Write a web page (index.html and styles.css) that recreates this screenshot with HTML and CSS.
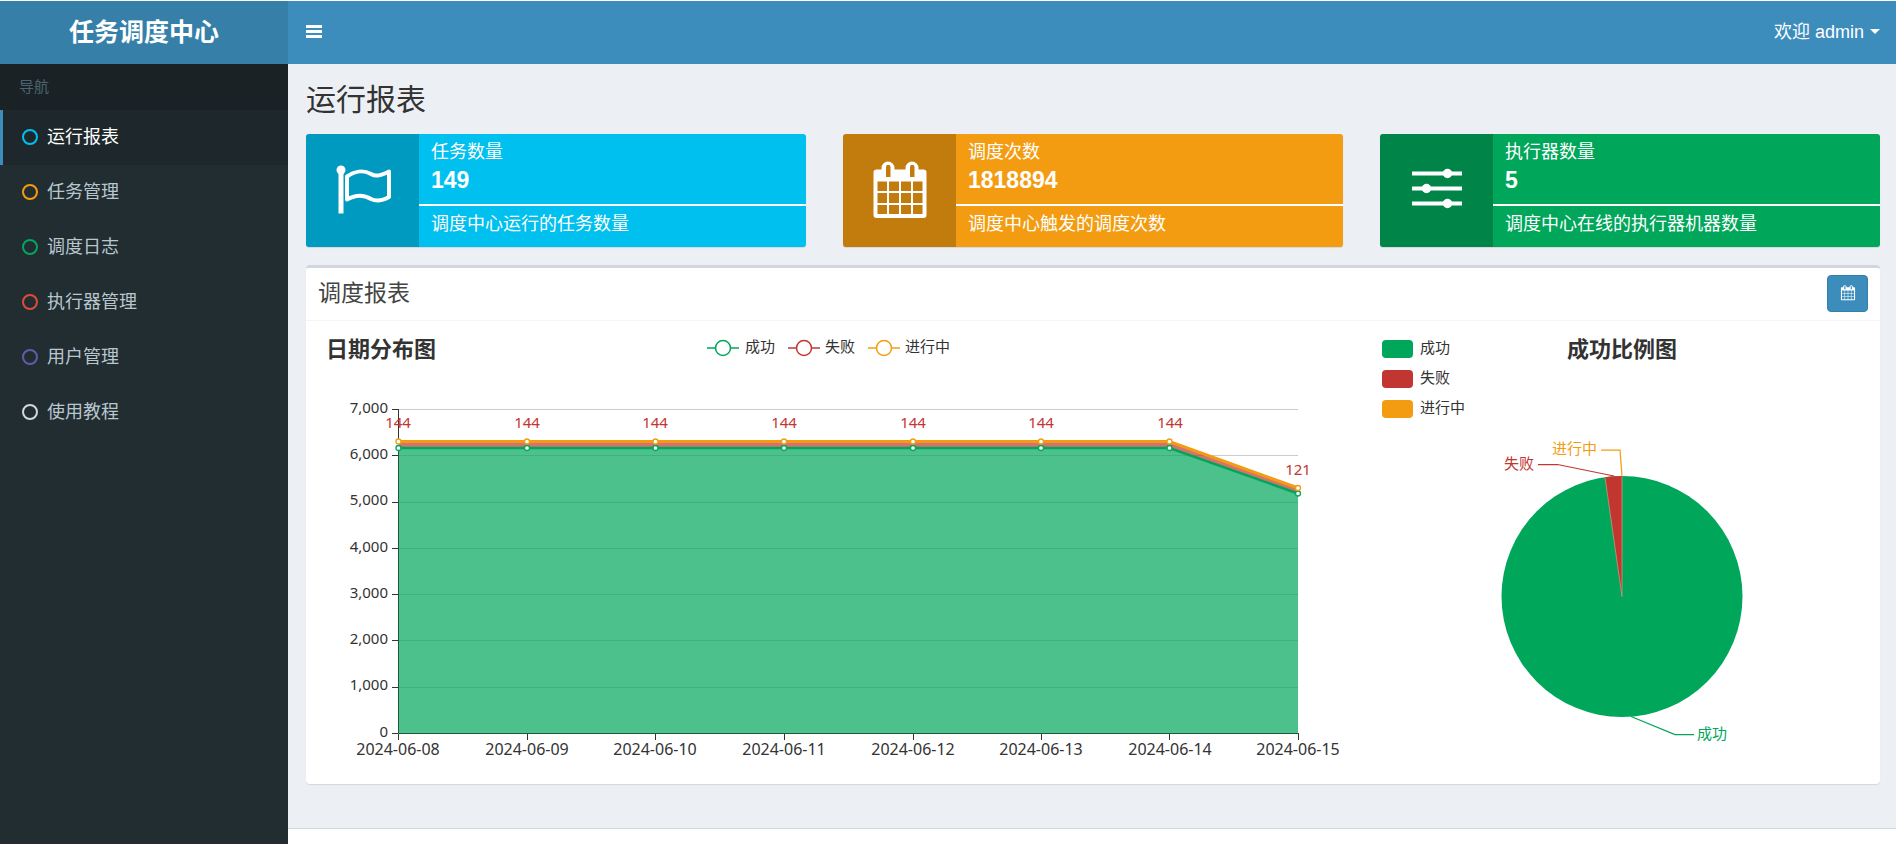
FILE: index.html
```html
<!DOCTYPE html>
<html lang="zh-CN">
<head>
<meta charset="utf-8">
<title>任务调度中心</title>
<link rel="stylesheet" href="styles.css">
</head>
<body>
<svg class="defs" aria-hidden="true">
  <symbol id="calendar" viewBox="0 0 60 60">
    <path fill="currentColor" fill-rule="evenodd" d="M3.500 11.500a3 3 0 0 1 3-3H11.500V7a6.500 6.500 0 0 1 13 0V8.500H35.500V7a6.500 6.500 0 0 1 13 0V8.500H53.500a3 3 0 0 1 3 3V54a3 3 0 0 1-3 3H6.500a3 3 0 0 1-3-3ZM16 6V16h4.500V6a2 2 0 0 0-4.500 0ZM40 6V16h4.500V6a2 2 0 0 0-4.500 0ZM7.500 20.500v9.500h9.500v-9.500ZM19 20.500v9.500h10v-9.500ZM31 20.500v9.500h10v-9.500ZM43 20.500v9.500h9.500v-9.500ZM7.500 32v10h9.500V32ZM19 32v10h10V32ZM31 32v10h10V32ZM43 32v10h9.500V32ZM7.500 44v9h9.500V44ZM19 44v9h10V44ZM31 44v9h10V44ZM43 44v9h9.500V44Z"/>
  </symbol>
</svg>
<header class="topbar">
  <a class="logo" href="#">任务调度中心</a>
  <nav class="navbar">
    <button class="toggle" type="button" aria-label="切换导航">
      <svg width="16" height="14" viewBox="0 0 16 14"><path d="M0 1.500h16M0 6.500h16M0 11.500h16" stroke="currentColor" stroke-width="3"/></svg>
    </button>
    <a class="user" href="#">欢迎 admin <span class="caret"></span></a>
  </nav>
</header>
<div class="wrapper">
  <aside class="sidebar">
    <div class="nav-title">导航</div>
    <nav class="menu">
      <a class="item active" href="#"><span class="ring aqua"></span>运行报表</a>
      <a class="item" href="#"><span class="ring yellow"></span>任务管理</a>
      <a class="item" href="#"><span class="ring green"></span>调度日志</a>
      <a class="item" href="#"><span class="ring red"></span>执行器管理</a>
      <a class="item" href="#"><span class="ring purple"></span>用户管理</a>
      <a class="item" href="#"><span class="ring gray"></span>使用教程</a>
    </nav>
  </aside>
  <div class="page">
    <main class="content">
      <h1>运行报表</h1>
      <section class="cards">
        <div class="card card-aqua">
          <div class="card-icon">
            <svg width="60" height="60" viewBox="-2 -2 60 60"><circle cx="6" cy="7" r="4.500" fill="currentColor"/><path d="M6 7V50.500" stroke="currentColor" stroke-width="5"/><path d="M12 13.500C19 8.500 28 6.500 36 11C41 14 46 12.500 54 8.500V34C46 38.500 41 38.500 36 36C28 31 20 32 12 36.500Z" fill="none" stroke="currentColor" stroke-width="4" stroke-linejoin="round"/></svg>
          </div>
          <div class="card-body"><div class="card-main"><span>任务数量</span><strong>149</strong></div><p>调度中心运行的任务数量</p></div>
        </div>
        <div class="card card-yellow">
          <div class="card-icon"><svg width="60" height="60"><use href="#calendar"/></svg></div>
          <div class="card-body"><div class="card-main"><span>调度次数</span><strong>1818894</strong></div><p>调度中心触发的调度次数</p></div>
        </div>
        <div class="card card-green">
          <div class="card-icon">
            <svg width="60" height="60" viewBox="0 0 60 60"><path d="M5 12.500H55M5 27.500H55M5 42.500H55" stroke="currentColor" stroke-width="4"/><g fill="currentColor"><circle cx="40.500" cy="12.500" r="4.700"/><circle cx="19.500" cy="27.500" r="4.700"/><circle cx="40.500" cy="42.500" r="4.700"/></g></svg>
          </div>
          <div class="card-body"><div class="card-main"><span>执行器数量</span><strong>5</strong></div><p>调度中心在线的执行器机器数量</p></div>
        </div>
      </section>
      <section class="box">
        <div class="box-header">
          <h2>调度报表</h2>
          <button class="date-btn" type="button" aria-label="选择日期"><svg width="16" height="16"><use href="#calendar"/></svg></button>
        </div>
        <div class="box-body">
          <svg class="chart" viewBox="0 0 1022 439" role="img" aria-label="日期分布图">
            <text class="chart-title" x="8" y="24">日期分布图</text>
            <g fill="#fff" stroke-width="1.500">
              <g stroke="#00a65a"><path d="M389 15h32"/><circle cx="405" cy="15" r="7.500"/></g>
              <g stroke="#c23632"><path d="M470 15h32"/><circle cx="486" cy="15" r="7.500"/></g>
              <g stroke="#f39c12"><path d="M550 15h32"/><circle cx="566" cy="15" r="7.500"/></g>
            </g>
            <g class="label"><text x="427" y="19">成功</text><text x="507" y="19">失败</text><text x="587" y="19">进行中</text></g>
            <path stroke="#ccc" d="M80 76.500H980M80 122.500H980M80 169.500H980M80 215.500H980M80 261.500H980M80 307.500H980M80 354.500H980"/>
            <path fill="#00a65a" fill-opacity=".7" d="M80.500 115H851.500L980 160.500V401H80.500Z"/>
            <path fill="#c23632" fill-opacity=".7" d="M80.500 108.500H851.500L980 155V160.500L851.500 115H80.500Z"/>
            <path fill="none" stroke="#333" d="M80.500 76V108M74 76.500h6M74 122.500h6M74 169.500h6M74 215.500h6M74 261.500h6M74 307.500h6M74 354.500h6M74 400.500h6M80.500 401v6M209.500 401v6M337.500 401v6M466.500 401v6M595.500 401v6M723.500 401v6M851.500 401v6M980.500 401v6"/>
            <path fill="none" stroke="#1d5a3d" d="M80.500 115V400.500H981"/>
            <path fill="none" stroke="#00a65a" stroke-width="2.500" d="M80.500 115H851.500L980 160.500"/>
            <path fill="none" stroke="#f39c12" stroke-width="3" d="M80.500 108.500H851.500L980 155"/>
            <g fill="#fff" stroke="#00a65a" stroke-width="1.300"><circle cx="80.500" cy="115" r="2.500"/><circle cx="209" cy="115" r="2.500"/><circle cx="337.500" cy="115" r="2.500"/><circle cx="466" cy="115" r="2.500"/><circle cx="595" cy="115" r="2.500"/><circle cx="723" cy="115" r="2.500"/><circle cx="851.500" cy="115" r="2.500"/><circle cx="980" cy="160.500" r="2.500"/></g>
            <g fill="#fff" stroke="#f39c12" stroke-width="1.300"><circle cx="80.500" cy="108.500" r="2.500"/><circle cx="209" cy="108.500" r="2.500"/><circle cx="337.500" cy="108.500" r="2.500"/><circle cx="466" cy="108.500" r="2.500"/><circle cx="595" cy="108.500" r="2.500"/><circle cx="723" cy="108.500" r="2.500"/><circle cx="851.500" cy="108.500" r="2.500"/><circle cx="980" cy="155" r="2.500"/></g>
            <g class="label value"><text x="80" y="95">144</text><text x="209" y="95">144</text><text x="337" y="95">144</text><text x="466" y="95">144</text><text x="595" y="95">144</text><text x="723" y="95">144</text><text x="852" y="95">144</text><text x="980" y="142">121</text></g>
            <g class="label y-label"><text x="70" y="80">7,000</text><text x="70" y="126">6,000</text><text x="70" y="172">5,000</text><text x="70" y="219">4,000</text><text x="70" y="265">3,000</text><text x="70" y="311">2,000</text><text x="70" y="357">1,000</text><text x="70" y="404">0</text></g>
            <g class="label x-label"><text x="80" y="422">2024-06-08</text><text x="209" y="422">2024-06-09</text><text x="337" y="422">2024-06-10</text><text x="466" y="422">2024-06-11</text><text x="595" y="422">2024-06-12</text><text x="723" y="422">2024-06-13</text><text x="852" y="422">2024-06-14</text><text x="980" y="422">2024-06-15</text></g>
          </svg>
          <svg class="chart" viewBox="0 0 511 439" role="img" aria-label="成功比例图">
            <rect x="25" y="7" width="31" height="18" rx="4" fill="#00a65a"/>
            <rect x="25" y="37" width="31" height="18" rx="4" fill="#c23632"/>
            <rect x="25" y="67" width="31" height="18" rx="4" fill="#f39c12"/>
            <g class="label"><text x="63" y="20">成功</text><text x="63" y="50">失败</text><text x="63" y="80">进行中</text></g>
            <text class="chart-title middle" x="265" y="24">成功比例图</text>
            <circle cx="265" cy="263.500" r="120.500" fill="#00a65a"/>
            <path fill="#c23632" d="M265 263.500L248 144.200A120.500 120.500 0 0 1 265 143Z"/>
            <path d="M265 263.500V143M265 263.500L248 144.200" stroke="#d99a80" stroke-width="1" stroke-opacity=".7"/>
            <g fill="none" stroke-width="1.250">
              <path stroke="#c23632" d="M181 131.500H200.500L257 143"/>
              <path stroke="#f39c12" d="M244 117H263L265 143"/>
              <path stroke="#00a65a" d="M274 383.500L318 401.500H337"/>
            </g>
            <g class="label"><text class="c-red" x="147" y="136">失败</text><text class="c-yellow" x="195" y="121">进行中</text><text class="c-green" x="340" y="406">成功</text></g>
          </svg>
        </div>
      </section>
    </main>
    <footer class="footer"></footer>
  </div>
</div>
</body>
</html>
```
FILE: styles.css
```css
* { box-sizing: border-box; }

body {
  margin: 0;
  padding-top: 1px;
  min-height: 100vh;
  display: flex;
  flex-direction: column;
  background: #fff;
  color: #333;
  font: 18px/26px "Liberation Sans", "Noto Sans CJK SC", sans-serif;
}

a { color: inherit; text-decoration: none; }
h1, h2, p { margin: 0; font-weight: 400; }
svg { display: block; }
.defs { position: absolute; width: 0; height: 0; }

.topbar { display: flex; height: 63px; color: #fff; }
.logo {
  flex: 0 0 288px;
  background: #367fa9;
  font-size: 25px;
  font-weight: 700;
  line-height: 62px;
  text-align: center;
}
.navbar {
  flex: 1;
  display: flex;
  align-items: center;
  justify-content: space-between;
  padding: 0 16px 2px 18px;
  background: #3c8dbc;
}
.toggle { padding: 0; border: 0; background: none; color: #fff; cursor: pointer; }
.user { display: flex; align-items: center; gap: 6px; }
.caret {
  border: 5px solid transparent;
  border-top-color: #fff;
  border-bottom: 0;
}

.wrapper { flex: 1; display: flex; }
.sidebar { flex: 0 0 288px; background: #222d32; }
.nav-title {
  height: 46px;
  padding: 0 19px;
  background: #1a2226;
  color: #4b646f;
  font-size: 15px;
  line-height: 46px;
}
.item {
  display: flex;
  align-items: center;
  gap: 9px;
  height: 55px;
  padding: 0 0 2px 19px;
  border-left: 3px solid transparent;
  color: #b8c7ce;
}
.item.active { border-color: #3c8dbc; background: #1e282c; color: #fff; }
.ring { width: 16px; height: 16px; border: 2px solid; border-radius: 50%; }
.aqua { color: #00c0ef; }
.yellow { color: #f39c12; }
.green { color: #00a65a; }
.red { color: #dd4b39; }
.purple { color: #605ca8; }
.gray { color: #d2d6de; }

.page { flex: 1; min-width: 0; display: flex; flex-direction: column; background: #ecf0f5; }
.content { padding: 18px 16px 44px 18px; }
h1 { font-size: 30px; line-height: 36px; }

.cards {
  display: grid;
  grid-template-columns: repeat(3, 1fr);
  gap: 37px;
  margin: 16px 0 18px;
}
.card {
  display: flex;
  min-height: 113px;
  border-radius: 3px;
  overflow: hidden;
  color: #fff;
  box-shadow: 0 1px 1px rgba(0, 0, 0, .1);
}
.card-icon {
  flex: 0 0 113px;
  display: flex;
  align-items: center;
  justify-content: center;
  background: rgba(0, 0, 0, .2);
}
.card-aqua { background: #00c0ef; }
.card-yellow { background: #f39c12; }
.card-green { background: #00a65a; }
.card-body { flex: 1; }
.card-main {
  display: flex;
  flex-direction: column;
  height: 72px;
  padding: 5px 12px 0;
  border-bottom: 2px solid #fff;
}
.card-main strong { font-size: 23px; line-height: 30px; }
.card-body p { padding: 5px 12px; }

.box {
  border-top: 3px solid #d2d6de;
  border-radius: 4px;
  background: #fff;
  box-shadow: 0 1px 1px rgba(0, 0, 0, .1);
}
.box-header {
  display: flex;
  align-items: center;
  justify-content: space-between;
  height: 53px;
  padding: 0 12px 2px;
  border-bottom: 1px solid #f4f4f4;
}
h2 { color: #444; font-size: 23px; line-height: 30px; }
.date-btn {
  display: flex;
  align-items: center;
  justify-content: center;
  width: 41px;
  height: 37px;
  padding: 0;
  border: 1px solid #367fa9;
  border-radius: 4px;
  background: #3c8dbc;
  color: #fff;
}
.box-body {
  display: grid;
  grid-template-columns: 2fr 1fr;
  gap: 17px;
  padding: 12px;
}
.chart { width: 100%; height: auto; overflow: visible; }
.chart-title {
  fill: #333;
  font-size: 22px;
  font-weight: 700;
}
.label { fill: #333; font-family: "Noto Sans", "Noto Sans CJK SC", sans-serif; font-size: 15px; }
.value { fill: #c23632; text-anchor: middle; }
.y-label { text-anchor: end; }
.x-label { font-size: 16px; text-anchor: middle; }
.middle { text-anchor: middle; }
.c-red { fill: #c23632; }
.c-yellow { fill: #f39c12; }
.c-green { fill: #00a65a; }

.footer { flex: 1; min-height: 15px; border-top: 1px solid #d2d6de; background: #fff; }
```
